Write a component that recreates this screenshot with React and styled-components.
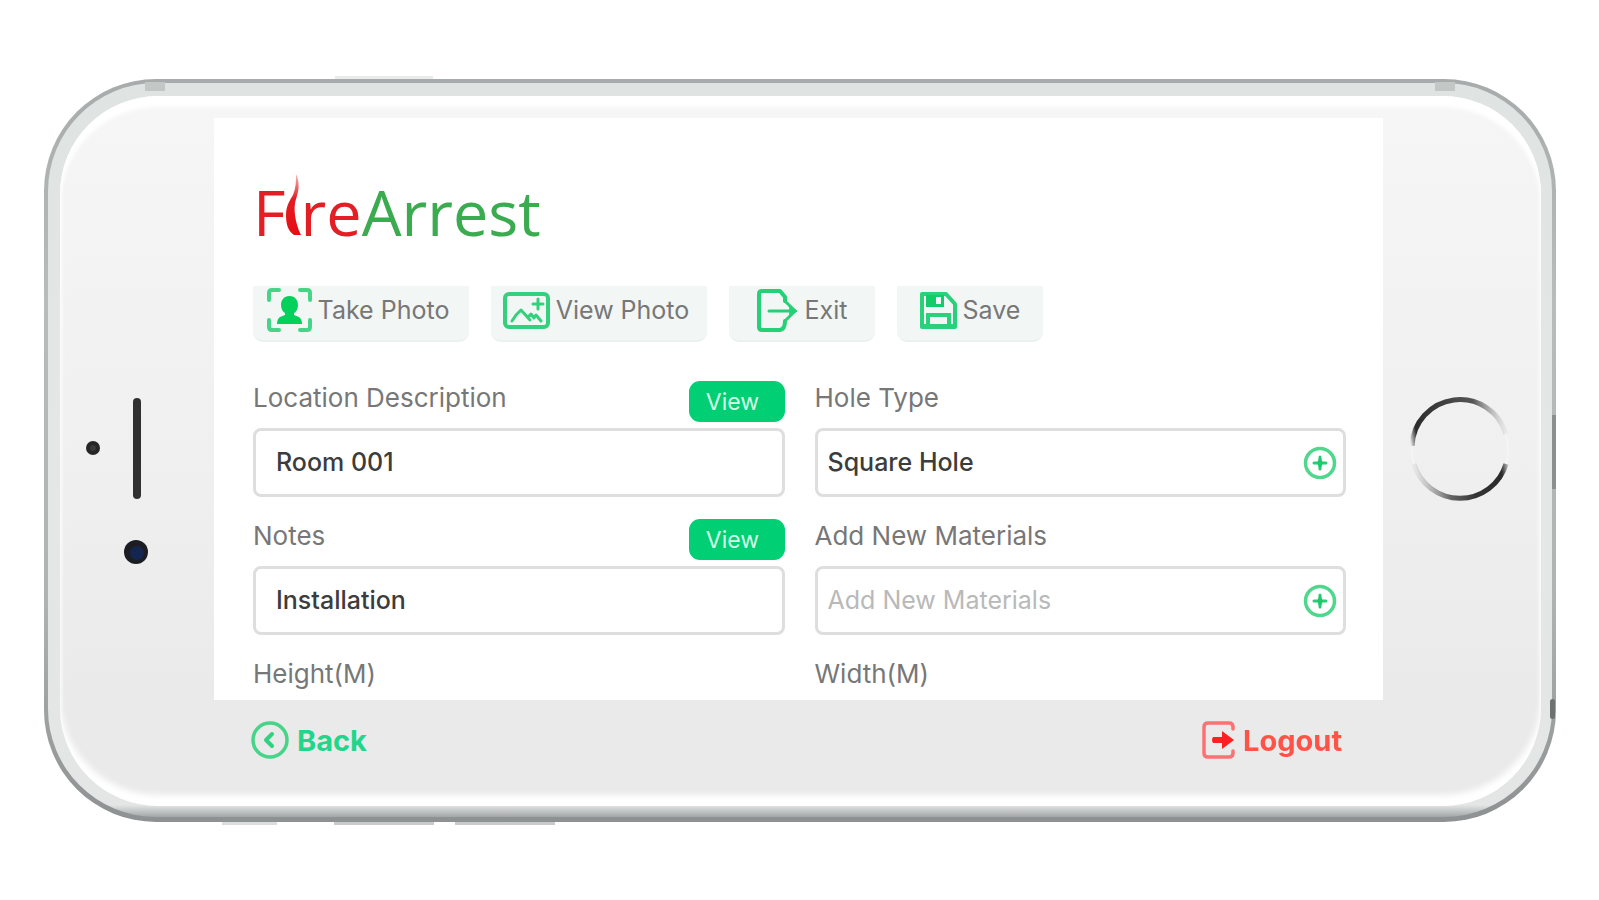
import React from 'react'
import styled, { createGlobalStyle } from 'styled-components'

const GlobalStyle = createGlobalStyle`
  * {
    box-sizing: border-box;
  }

  body {
    margin: 0;
    background: #fff;
    font-family: Inter, "Liberation Sans", sans-serif;
  }

  button, input {
    font-family: inherit;
  }
`

const Page = styled.main`
  height: 100vh;
  min-height: 700px;
  min-width: 1280px;
  padding: 79px 43px 78px 44px;
`

const Phone = styled.div`
  position: relative;
  display: flex;
  height: 100%;
  padding: 4px 4px 5px 4px;
  border-radius: 112px;
  background: linear-gradient(#a8abab, #b9bcbc 30%, #b0b3b3 70%, #8d9191);
`

const Rim = styled.div`
  flex: 1;
  display: flex;
  padding: 13px 11px 11px 12px;
  border-radius: 108px;
  background: linear-gradient(#dfe3e2, #e3e7e6 50%, #e3e6e5 calc(100% - 12px), #a3a6a6);
`

const Face = styled.div`
  flex: 1;
  display: grid;
  grid-template-columns: 154px 1fr 158px;
  padding: 22px 0 26px;
  border-radius: 98px;
  background: linear-gradient(#f6f6f6, #f0f0f0 50%, #eaeaea 85%);
  box-shadow: inset 0 11px 4px #fff, inset 0 -11px 6px #fff;
`

// keys and antenna bands that sit on the phone's edge
const EdgeMark = styled.span`
  position: absolute;
  background: ${props => props.color};
  ${props => props.area}
`

const Bezel = styled.div`
  display: flex;
  align-items: center;
`

const Screen = styled.div`
  display: flex;
  flex-direction: column;
  min-height: 0;
`

const Content = styled.div`
  flex: 1;
  min-height: 0;
  padding: 52px 37px 0 39px;
  overflow-y: auto;
  scrollbar-width: none;
  background: #fff;
`

const Logo = styled.h1`
  display: flex;
  align-items: baseline;
  height: 80px;
  margin: 0 0 36px;
  font-family: "Open Sans", "Noto Sans", sans-serif;
  font-size: 63px;
  font-weight: 400;
  line-height: 84px;
  color: #e31e24;

  & > .green {
    color: #3bab50;
  }
`

const Toolbar = styled.div`
  display: flex;
  gap: 22px;
  margin-bottom: 39px;
`

const ToolButton = styled.button`
  display: flex;
  align-items: center;
  justify-content: center;
  gap: 6px;
  width: ${props => props.wide ? 216 : 146}px;
  height: 56px;
  padding: 0 ${props => props.wide ? 6 : 0}px 6px 0;
  border: 0;
  border-bottom: 2px solid #eaf1ee;
  border-radius: 0 0 10px 10px;
  background: #f2f6f5;
  color: #777;
  font-size: 25px;
  white-space: nowrap;
`

const Form = styled.form`
  display: grid;
  grid-template-columns: 1fr 1fr;
  gap: 22px 30px;
`

const FieldHead = styled.div`
  display: flex;
  justify-content: space-between;
  height: 41px;
  margin-bottom: 6px;

  & > label {
    font-size: 26px;
    line-height: 34px;
    color: #777;
  }
`

const ViewButton = styled.button`
  width: 96px;
  height: 41px;
  padding: 0 8px 0 0;
  border: 0;
  border-radius: 11px;
  background: #00cf74;
  color: #d5fbe6;
  font-size: 23px;
`

const InputBox = styled.div`
  display: flex;
  align-items: center;
  height: 69px;
  padding: 0 6px 0 ${props => props.inset}px;
  border: 3px solid #dedede;
  border-radius: 8px;

  & > input {
    flex: 1;
    min-width: 0;
    padding: 0 0 2px;
    border: 0;
    outline: 0;
    background: none;
    color: #3c3c3c;
    font-size: 25px;
    font-weight: 500;
  }

  & > input::placeholder {
    color: #b9b9b9;
    font-weight: 400;
  }
`

const AddButton = styled.button`
  display: flex;
  padding: 0;
  border: 0;
  background: none;
`

const Footer = styled.footer`
  display: flex;
  align-items: center;
  justify-content: space-between;
  height: 80px;
  padding: 0 41px 0 37px;
`

const FooterLink = styled.a`
  display: flex;
  align-items: center;
  gap: 8px;
  color: ${props => props.danger ? '#ff5348' : '#1fd68b'};
  font-size: 29px;
  font-weight: 700;
  text-decoration: none;
`

const Flame = () => (
  <svg width="15" height="62" viewBox="0 0 15 62" aria-hidden="true">
    <defs>
      <linearGradient id="flame" x1="0" y1="0" x2="0" y2="1">
        <stop offset="0" stopColor="#e31e24" stopOpacity="0.3" />
        <stop offset="0.4" stopColor="#e31e24" />
        <stop offset="1" stopColor="#e60d14" />
      </linearGradient>
    </defs>
    <path fill="url(#flame)" d="M10 0C14 8 13 17 10 25C7 34 9 49 15 61H8C2 57 0 50 0 41C0 32 4 26 7 21C10 14 10 7 10 0Z" />
  </svg>
)

const TakePhotoIcon = () => (
  <svg width="45" height="44" viewBox="0 0 45 44" fill="none" aria-hidden="true">
    <path stroke="#46d486" strokeWidth="4" strokeLinecap="round" strokeLinejoin="round" d="M2 12V5Q2 2 5 2H12M33 2H40Q43 2 43 5V12M43 32V39Q43 42 40 42H33M12 42H5Q2 42 2 39V32" />
    <path fill="#04d05c" d="M22.500 8C28 8 31 12 31 17C31 21 29 24 27 25V27L32 29Q35 31 35 36H10Q10 31 13 29L18 27V25C16 24 14 21 14 17C14 12 17 8 22.500 8Z" />
  </svg>
)

const ViewPhotoIcon = () => (
  <svg width="47" height="37" viewBox="0 0 47 37" fill="none" stroke="#35d07d" strokeLinecap="round" strokeLinejoin="round" aria-hidden="true">
    <rect x="2" y="2" width="43" height="33" rx="4" strokeWidth="4" />
    <path strokeWidth="3" d="M9 29L13 23L18 18L27 28M25 25L28 22L31 26L33 23L38 29" />
    <path strokeWidth="3" d="M35 7V17M30 12H40" />
  </svg>
)

const ExitIcon = () => (
  <svg width="42" height="43" viewBox="0 0 42 43" fill="none" stroke="#25d077" strokeWidth="4" strokeLinecap="round" strokeLinejoin="round" aria-hidden="true">
    <path d="M28 12V8L23 2H5Q2 2 2 5V38Q2 41 5 41H23Q28 40 28 32" />
    <path strokeWidth="3" d="M12 22H36M28 12L38 22L28 32" />
    <path fill="#25d077" strokeWidth="1" d="M33 17L40 22L33 27Z" />
  </svg>
)

const SaveIcon = () => (
  <svg width="37" height="37" viewBox="0 0 37 37" fill="none" stroke="#2bd07a" aria-hidden="true">
    <path strokeWidth="4" strokeLinejoin="round" d="M2 2H26L35 12V35H2Z" />
    <path fill="#12cc69" stroke="none" d="M6 3H24V15H6Z" />
    <path fill="#f2f6f5" stroke="none" d="M16 5H21V12H16Z" />
    <path strokeWidth="4" d="M8 35V23H29V35" />
    <path strokeWidth="4" d="M4 34H33" />
  </svg>
)

const PlusIcon = () => (
  <svg width="34" height="34" viewBox="0 0 34 34" fill="none" aria-hidden="true">
    <circle cx="17" cy="17" r="14.500" stroke="#4fd88d" strokeWidth="3.500" />
    <path stroke="#2ccc77" strokeWidth="3" strokeLinecap="round" d="M17 11V23M11 17H23" />
    <path fill="#1fc96e" d="M17 10L20 17L17 24L14 17Z" />
  </svg>
)

const BackIcon = () => (
  <svg width="38" height="38" viewBox="0 0 38 38" fill="none" stroke="#46d489" aria-hidden="true">
    <circle cx="19" cy="19" r="17" strokeWidth="3.500" />
    <path stroke="#2fd281" strokeWidth="4" strokeLinecap="round" strokeLinejoin="round" d="M21 13L15 19L21 25" />
  </svg>
)

const LogoutIcon = () => (
  <svg width="33" height="38" viewBox="0 0 33 38" fill="none" aria-hidden="true">
    <path stroke="#fb7274" strokeWidth="3.500" strokeLinecap="round" strokeLinejoin="round" d="M31 8V6Q31 2 27 2H6Q2 2 2 6V32Q2 36 6 36H27Q31 36 31 32V30" />
    <path fill="#fd2022" d="M11 16H20V10L32 19L20 28V22H11Q9 19 11 16Z" />
  </svg>
)

const Sensors = () => (
  <svg width="154" height="250" viewBox="0 0 154 250" aria-hidden="true">
    <circle cx="33" cy="124" r="7" fill="#262626" />
    <circle cx="33" cy="124" r="3" fill="#3a3a3a" />
    <rect x="73" y="74" width="8" height="101" rx="4" fill="#303030" />
    <circle cx="76" cy="228" r="12" fill="#1c1d22" />
    <circle cx="77" cy="229" r="7" fill="#14264f" />
  </svg>
)

const HomeRing = () => (
  <svg width="158" height="120" viewBox="0 0 158 120" fill="none" strokeWidth="5" aria-hidden="true">
    <defs>
      <linearGradient id="ringTop" gradientUnits="userSpaceOnUse" x1="28" y1="58" x2="125" y2="40">
        <stop offset="0" stopColor="#2b2b2b" stopOpacity="0" />
        <stop offset="0.08" stopColor="#2b2b2b" />
        <stop offset="0.7" stopColor="#555" />
        <stop offset="1" stopColor="#888" stopOpacity="0" />
      </linearGradient>
      <linearGradient id="ringBottom" gradientUnits="userSpaceOnUse" x1="28" y1="82" x2="126" y2="66">
        <stop offset="0" stopColor="#888" stopOpacity="0" />
        <stop offset="0.35" stopColor="#666" />
        <stop offset="0.6" stopColor="#333" />
        <stop offset="0.9" stopColor="#2b2b2b" />
        <stop offset="1" stopColor="#2b2b2b" stopOpacity="0" />
      </linearGradient>
    </defs>
    <circle cx="77" cy="61" r="48" strokeWidth="2" stroke="#f4f4f4" />
    <path stroke="url(#ringTop)" d="M29 57A48 48 0 0 1 123 45" />
    <path stroke="url(#ringBottom)" d="M31 75A48 48 0 0 0 123 75" />
  </svg>
)

const fields = [
  { id: 'location', label: 'Location Description', value: 'Room 001', view: true },
  { id: 'hole', label: 'Hole Type', value: 'Square Hole', add: true },
  { id: 'notes', label: 'Notes', value: 'Installation', view: true },
  { id: 'materials', label: 'Add New Materials', placeholder: 'Add New Materials', add: true },
  { id: 'height', label: 'Height(M)' },
  { id: 'width', label: 'Width(M)' },
]

const edgeMarks = [
  { color: '#c3c7c6', area: 'top: 3px; left: 101px; width: 20px; height: 9px;' },
  { color: '#c3c7c6', area: 'top: 3px; right: 101px; width: 20px; height: 9px;' },
  { color: '#e9ebea', area: 'top: -3px; left: 291px; width: 98px; height: 3px;' },
  { color: '#dcdedd', area: 'bottom: -3px; left: 178px; width: 55px; height: 3px;' },
  { color: '#c9cbcb', area: 'bottom: -3px; left: 290px; width: 100px; height: 3px;' },
  { color: '#c9cbcb', area: 'bottom: -3px; left: 411px; width: 100px; height: 3px;' },
  { color: '#8b8f8e', area: 'top: 336px; right: 0; width: 4px; height: 74px;' },
  { color: '#6e7271', area: 'top: 620px; right: 1px; width: 5px; height: 20px; border-radius: 3px;' },
]

const Field = ({ field }) => (
  <div>
    <FieldHead>
      <label htmlFor={field.id}>{field.label}</label>
      {field.view && <ViewButton type="button">View</ViewButton>}
    </FieldHead>
    <InputBox inset={field.add ? 10 : 20}>
      <input id={field.id} defaultValue={field.value} placeholder={field.placeholder} />
      {field.add &&
      <AddButton type="button" aria-label={`Add ${field.label}`}>
        <PlusIcon />
      </AddButton>
      }
    </InputBox>
  </div>
)

const App = () => {
  return (
    <Page>
      <GlobalStyle />
      <Phone>
        <Rim>
          <Face>
            <Bezel><Sensors /></Bezel>
            <Screen>
              <Content>
                <Logo aria-label="FireArrest">
                  <span>F</span>
                  <Flame />
                  <span>re</span>
                  <span className="green">Arrest</span>
                </Logo>
                <Toolbar>
                  <ToolButton wide="true"><TakePhotoIcon />Take Photo</ToolButton>
                  <ToolButton wide="true"><ViewPhotoIcon />View Photo</ToolButton>
                  <ToolButton><ExitIcon />Exit</ToolButton>
                  <ToolButton><SaveIcon />Save</ToolButton>
                </Toolbar>
                <Form>
                  {fields.map(field => <Field key={field.id} field={field} />)}
                </Form>
              </Content>
              <Footer>
                <FooterLink href="#back"><BackIcon />Back</FooterLink>
                <FooterLink href="#logout" danger="true"><LogoutIcon />Logout</FooterLink>
              </Footer>
            </Screen>
            <Bezel><HomeRing /></Bezel>
          </Face>
        </Rim>
        {edgeMarks.map(mark => <EdgeMark key={mark.area} {...mark} />)}
      </Phone>
    </Page>
  )
}

export default App
